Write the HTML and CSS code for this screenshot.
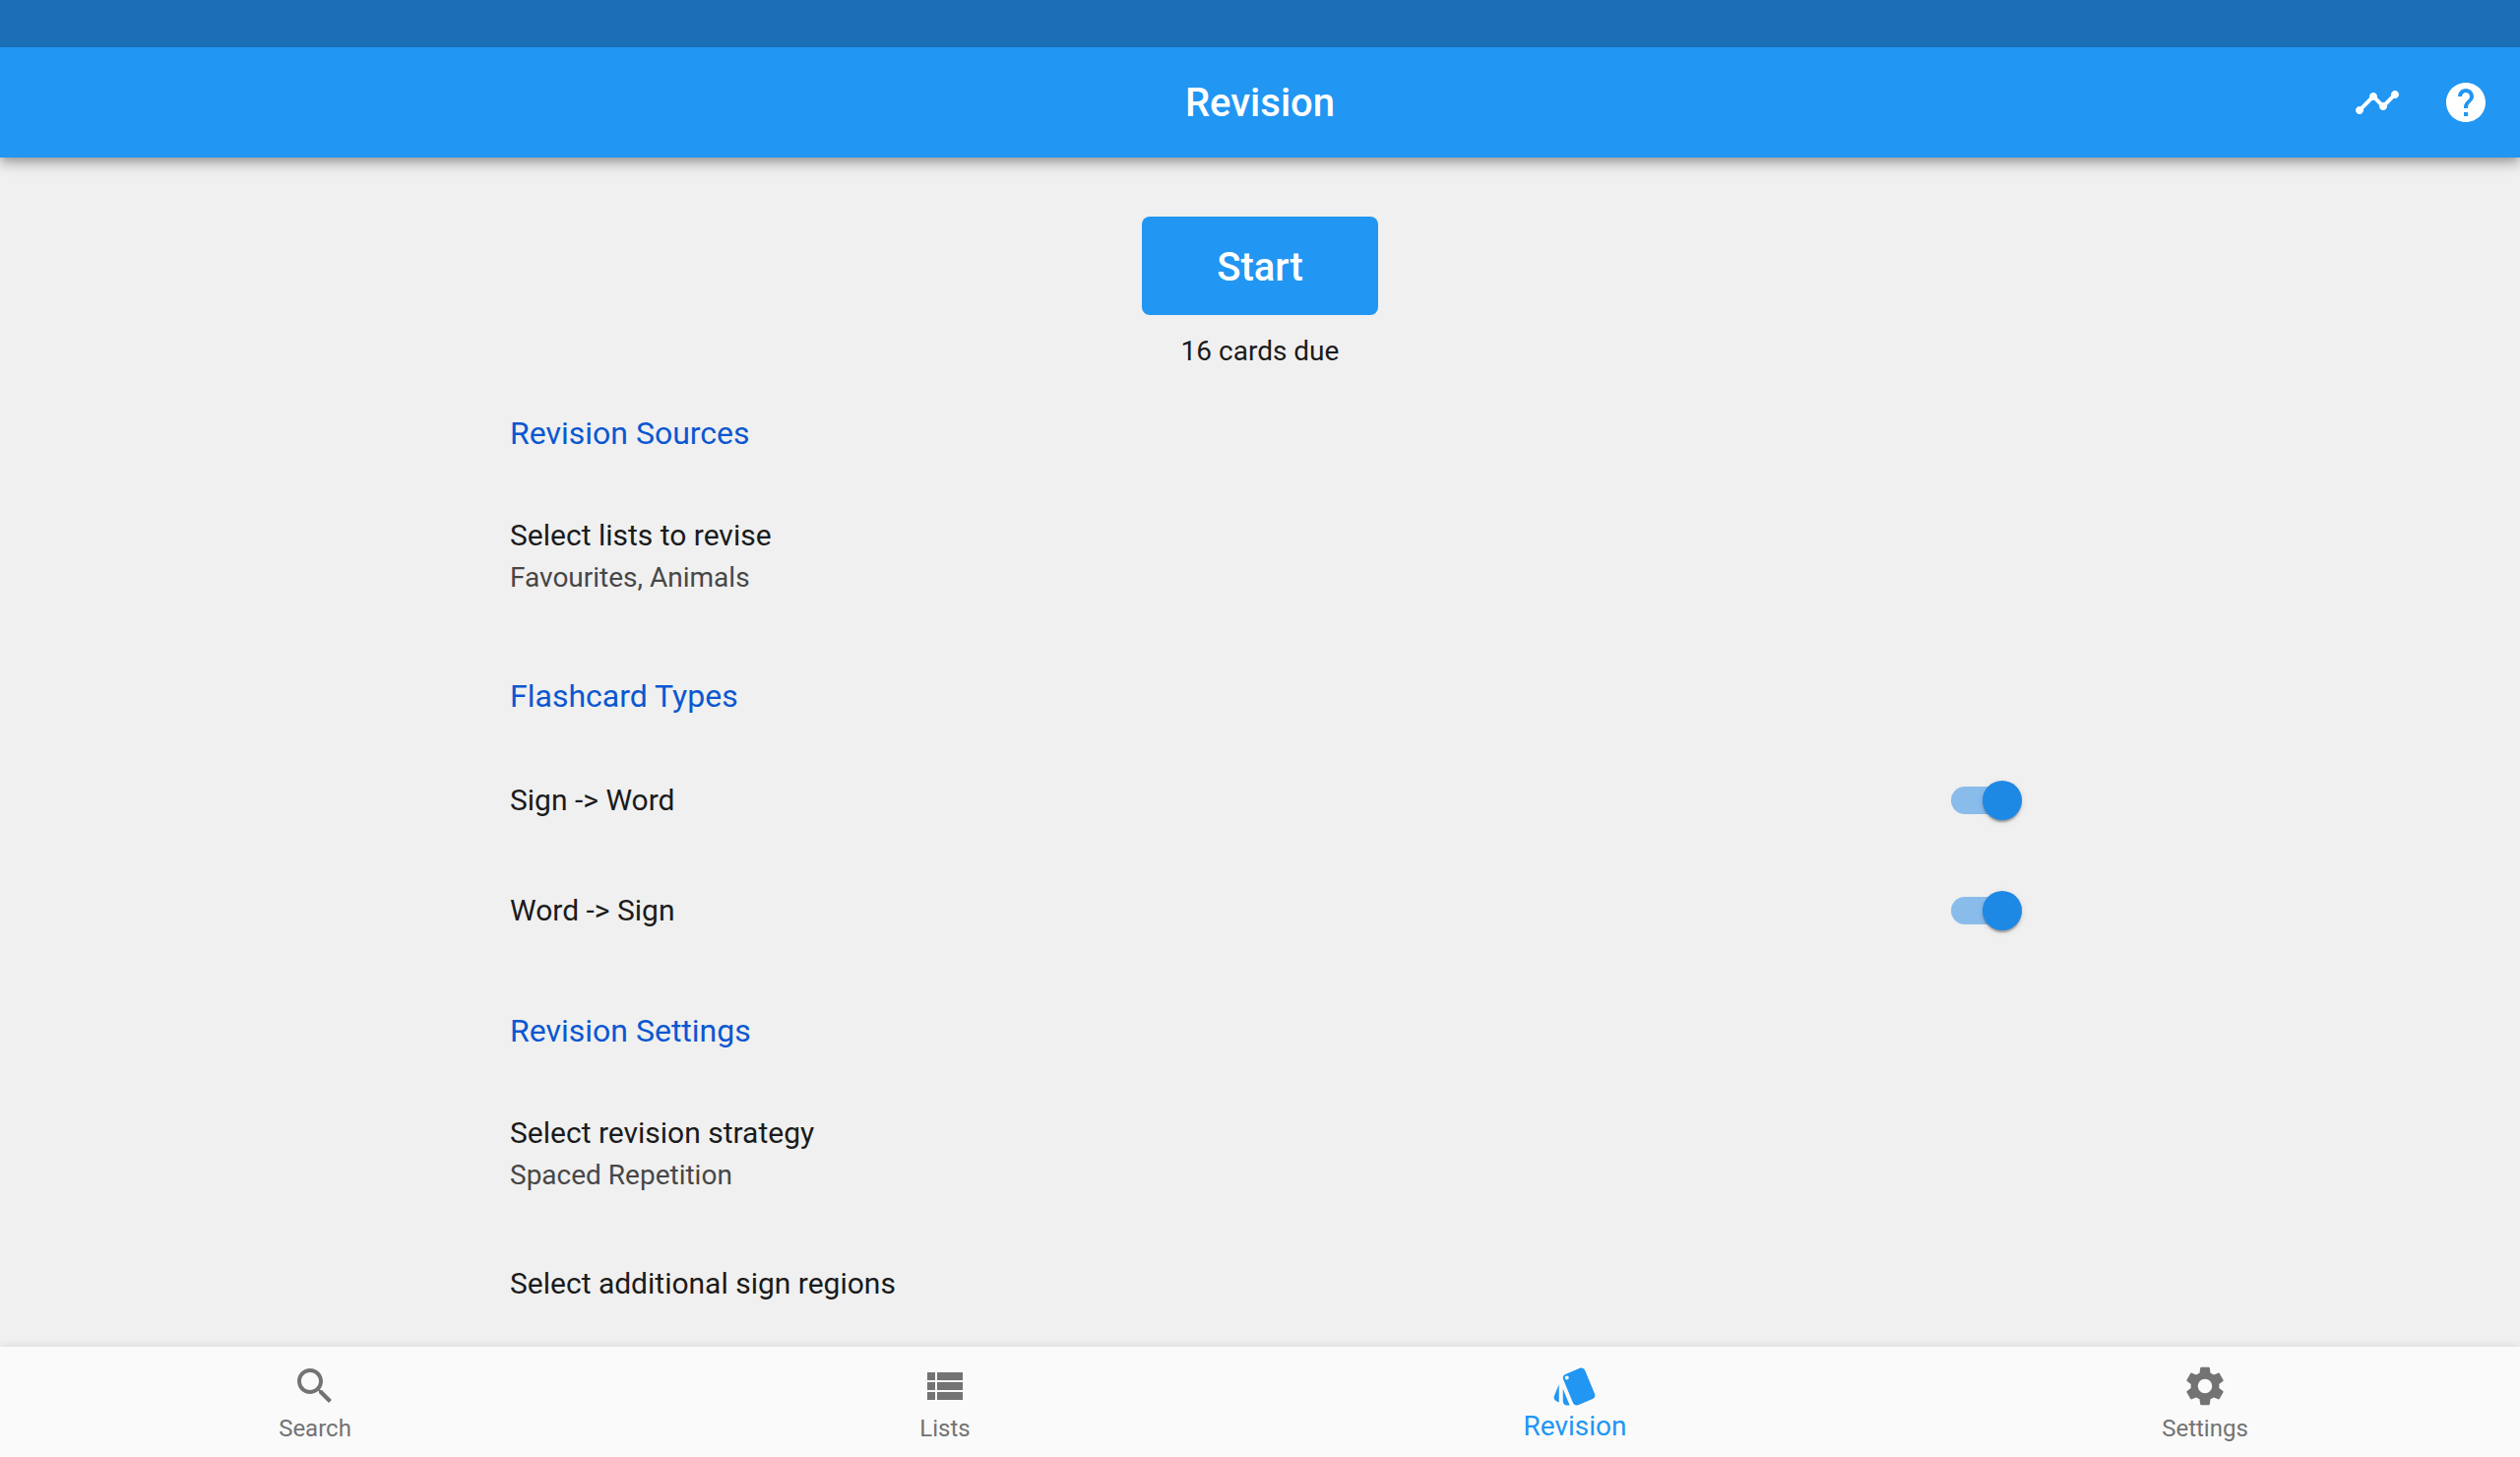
FILE: index.html
```html
<!DOCTYPE html>
<html lang="en">
<head>
  <meta charset="utf-8">
  <meta name="viewport" content="width=device-width, initial-scale=1">
  <title>Revision</title>
  <link rel="stylesheet" href="styles.css">
</head>
<body>
  <div class="app">
    <header class="top">
      <div class="status-bar"></div>
      <div class="app-bar">
        <h1 class="app-title">Revision</h1>
        <div class="actions">
          <button class="icon-button" type="button" aria-label="Progress">
            <svg class="icon" viewBox="0 0 24 24" aria-hidden="true"><path d="M23 8c0 1.100-.9 2-2 2-.18 0-.35-.02-.51-.07l-3.560 3.550c.05.16.07.34.07.52 0 1.100-.9 2-2 2s-2-.9-2-2c0-.18.02-.36.07-.52l-2.550-2.550c-.16.05-.34.07-.52.07s-.36-.02-.52-.07l-4.550 4.560c.05.16.07.33.07.51 0 1.100-.9 2-2 2s-2-.9-2-2 .9-2 2-2c.18 0 .35.02.51.07l4.560-4.550C8.020 9.360 8 9.180 8 9c0-1.100.9-2 2-2s2 .9 2 2c0 .18-.02.36-.07.52l2.550 2.550c.16-.05.34-.07.52-.07s.36.02.52.07l3.550-3.560C19.020 8.350 19 8.180 19 8c0-1.100.9-2 2-2s2 .9 2 2z"/></svg>
          </button>
          <button class="icon-button" type="button" aria-label="Help">
            <svg class="icon" viewBox="0 0 24 24" aria-hidden="true"><path d="M12 2C6.480 2 2 6.480 2 12s4.480 10 10 10 10-4.480 10-10S17.520 2 12 2zm1 17h-2v-2h2v2zm2.070-7.750l-.9.920C13.450 12.900 13 13.500 13 15h-2v-.5c0-1.100.45-2.100 1.170-2.830l1.240-1.260c.37-.36.59-.86.59-1.410 0-1.100-.9-2-2-2s-2 .9-2 2H8c0-2.210 1.790-4 4-4s4 1.790 4 4c0 .88-.36 1.680-.93 2.250z"/></svg>
          </button>
        </div>
      </div>
    </header>

    <main class="content">
      <div class="hero">
        <button class="start" type="button">Start</button>
        <p class="due">16 cards due</p>
      </div>

      <section class="section">
        <h2 class="section-title">Revision Sources</h2>
        <button class="tile tile-tall" type="button">
          <span class="tile-title">Select lists to revise</span>
          <span class="tile-value">Favourites, Animals</span>
        </button>
      </section>

      <section class="section">
        <h2 class="section-title">Flashcard Types</h2>
        <label class="tile tile-switch">
          <span class="tile-title">Sign -&gt; Word</span>
          <input class="switch" type="checkbox" role="switch" checked>
        </label>
        <label class="tile tile-switch">
          <span class="tile-title">Word -&gt; Sign</span>
          <input class="switch" type="checkbox" role="switch" checked>
        </label>
      </section>

      <section class="section">
        <h2 class="section-title">Revision Settings</h2>
        <button class="tile tile-tall" type="button">
          <span class="tile-title">Select revision strategy</span>
          <span class="tile-value">Spaced Repetition</span>
        </button>
        <button class="tile" type="button">
          <span class="tile-title">Select additional sign regions</span>
        </button>
      </section>
    </main>

    <nav class="bottom-nav">
      <a class="nav-item" href="#search">
        <svg class="icon" viewBox="0 0 24 24" aria-hidden="true"><path d="M15.500 14h-.79l-.28-.27C15.410 12.590 16 11.110 16 9.500 16 5.910 13.090 3 9.500 3S3 5.910 3 9.500 5.910 16 9.500 16c1.610 0 3.090-.59 4.230-1.570l.27.28v.79l5 4.990L20.490 19l-4.990-5zm-6 0C7.010 14 5 11.990 5 9.500S7.010 5 9.500 5 14 7.010 14 9.500 11.990 14 9.500 14z"/></svg>
        <span>Search</span>
      </a>
      <a class="nav-item" href="#lists">
        <svg class="icon" viewBox="0 0 24 24" aria-hidden="true"><path d="M3 14h4v-4H3v4zm0 5h4v-4H3v4zM3 9h4V5H3v4zm5 5h13v-4H8v4zm0 5h13v-4H8v4zM8 5v4h13V5H8z"/></svg>
        <span>Lists</span>
      </a>
      <a class="nav-item nav-item-active" href="#revision" aria-current="page">
        <svg class="icon" viewBox="0 0 24 24" aria-hidden="true"><path d="M2.530 19.650l1.340.56v-9.030l-2.430 5.860c-.41 1.020.08 2.190 1.090 2.610zm19.500-3.700L17.070 3.980c-.31-.75-1.040-1.210-1.810-1.230-.26 0-.53.04-.79.15L7.100 5.950c-.75.31-1.210 1.030-1.230 1.800-.01.27.04.54.15.8l4.960 11.970c.31.76 1.050 1.220 1.830 1.230.26 0 .52-.05.77-.15l7.360-3.050c1.020-.42 1.510-1.590 1.090-2.600zM7.880 8.750c-.55 0-1-.45-1-1s.45-1 1-1 1 .45 1 1-.45 1-1 1zm-2 11c0 1.100.9 2 2 2h1.450l-3.450-8.340v6.340z"/></svg>
        <span>Revision</span>
      </a>
      <a class="nav-item" href="#settings">
        <svg class="icon" viewBox="0 0 24 24" aria-hidden="true"><path d="M19.140 12.940c.04-.3.06-.61.06-.94 0-.32-.02-.64-.07-.94l2.030-1.580c.18-.14.23-.41.12-.61l-1.920-3.320c-.12-.22-.37-.29-.59-.22l-2.390.96c-.5-.38-1.030-.7-1.620-.94l-.36-2.540c-.04-.24-.24-.41-.48-.41h-3.840c-.24 0-.43.17-.47.41l-.36 2.540c-.59.24-1.130.57-1.620.94l-2.390-.96c-.22-.08-.47 0-.59.22L2.740 8.870c-.12.21-.08.47.12.61l2.030 1.580c-.05.3-.09.63-.09.94s.02.64.07.94l-2.030 1.580c-.18.14-.23.41-.12.61l1.920 3.320c.12.22.37.29.59.22l2.390-.96c.5.38 1.030.7 1.620.94l.36 2.540c.05.24.24.41.48.41h3.840c.24 0 .44-.17.47-.41l.36-2.540c.59-.24 1.130-.56 1.620-.94l2.390.96c.22.08.47 0 .59-.22l1.920-3.320c.12-.22.07-.47-.12-.61l-2.010-1.580zM12 15.600c-1.980 0-3.600-1.620-3.600-3.600s1.620-3.600 3.600-3.600 3.600 1.620 3.600 3.600-1.620 3.600-3.600 3.600z"/></svg>
        <span>Settings</span>
      </a>
    </nav>
  </div>
</body>
</html>
```
FILE: styles.css
```css
* {
  box-sizing: border-box;
}

body {
  margin: 0;
  background: #f0f0f0;
  color: #1b1b1b;
  font-family: Roboto, "Noto Sans", sans-serif;
}

button {
  border: 0;
  background: none;
  color: inherit;
  font: inherit;
  cursor: pointer;
}

.app {
  display: flex;
  flex-direction: column;
  height: 100vh;
}

/* Header */
.top {
  z-index: 1;
  background: #2196f3;
  color: #fff;
  box-shadow: 0 4px 8px -2px rgba(0, 0, 0, 0.2), 0 8px 10px rgba(0, 0, 0, 0.14), 0 2px 20px rgba(0, 0, 0, 0.12);
}

.status-bar {
  height: 48px;
  background: #1a6fb6;
}

.app-bar {
  display: grid;
  grid-template-columns: 1fr auto 1fr;
  align-items: center;
  height: 112px;
  padding: 0 10px;
}

.app-title {
  grid-column: 2;
  margin: 0;
  padding-top: 2px;
  font-size: 40px;
  font-weight: 500;
  line-height: 48px;
}

.actions {
  display: flex;
  justify-content: flex-end;
}

.icon-button {
  display: grid;
  place-items: center;
  width: 90px;
  height: 90px;
  padding: 0;
}

.icon {
  width: 48px;
  height: 48px;
  fill: currentColor;
}

/* Scrolling content */
.content {
  flex: 1;
  min-height: 0;
  overflow-y: auto;
  scrollbar-width: none;
}

.hero {
  display: flex;
  flex-direction: column;
  align-items: center;
  gap: 20px;
  padding-top: 60px;
}

.start {
  width: 240px;
  height: 100px;
  padding: 2px 0 0;
  border-radius: 8px;
  background: #2196f3;
  color: #fff;
  font-size: 40px;
  font-weight: 500;
}

.due {
  margin: 0;
  font-size: 28px;
  line-height: 34px;
}

.section {
  max-width: 1620px;
  margin: 0 auto;
}

.section-title {
  margin: 0;
  padding: 47px 48px 31px;
  color: #0b57d0;
  font-size: 32px;
  font-weight: 400;
  line-height: 38px;
}

.tile {
  display: flex;
  flex-direction: column;
  justify-content: center;
  gap: 7px;
  width: 100%;
  min-height: 112px;
  padding: 0 36px 0 48px;
  text-align: left;
}

.tile-tall {
  min-height: 151px;
}

.tile-switch {
  flex-direction: row;
  align-items: center;
  justify-content: space-between;
}

.tile-title {
  font-size: 30px;
  line-height: 36px;
}

.tile-value {
  color: #474747;
  font-size: 28px;
  line-height: 36px;
}

.switch {
  display: flex;
  align-items: center;
  justify-content: flex-end;
  width: 72px;
  height: 28px;
  margin: 0;
  border-radius: 14px;
  background: #8abceb;
  appearance: none;
}

.switch::before {
  content: "";
  width: 40px;
  height: 40px;
  border-radius: 50%;
  background: #1e88e5;
  box-shadow: 0 4px 2px -2px rgba(0, 0, 0, 0.2), 0 2px 2px rgba(0, 0, 0, 0.14), 0 2px 6px rgba(0, 0, 0, 0.12);
}

.switch:not(:checked) {
  justify-content: flex-start;
  background: #bdbdbd;
}

.switch:not(:checked)::before {
  background: #fafafa;
}

/* Bottom navigation */
.bottom-nav {
  z-index: 1;
  display: grid;
  grid-template-columns: repeat(4, 1fr);
  height: 112px;
  background: #fafafa;
  box-shadow: 0 -2px 8px rgba(0, 0, 0, 0.08);
}

.nav-item {
  display: flex;
  flex-direction: column;
  align-items: center;
  gap: 4px;
  padding-top: 16px;
  color: #737373;
  font-size: 24px;
  line-height: 30px;
  text-decoration: none;
}

.nav-item-active {
  color: #2196f3;
  font-size: 28px;
  line-height: 26px;
}
```
